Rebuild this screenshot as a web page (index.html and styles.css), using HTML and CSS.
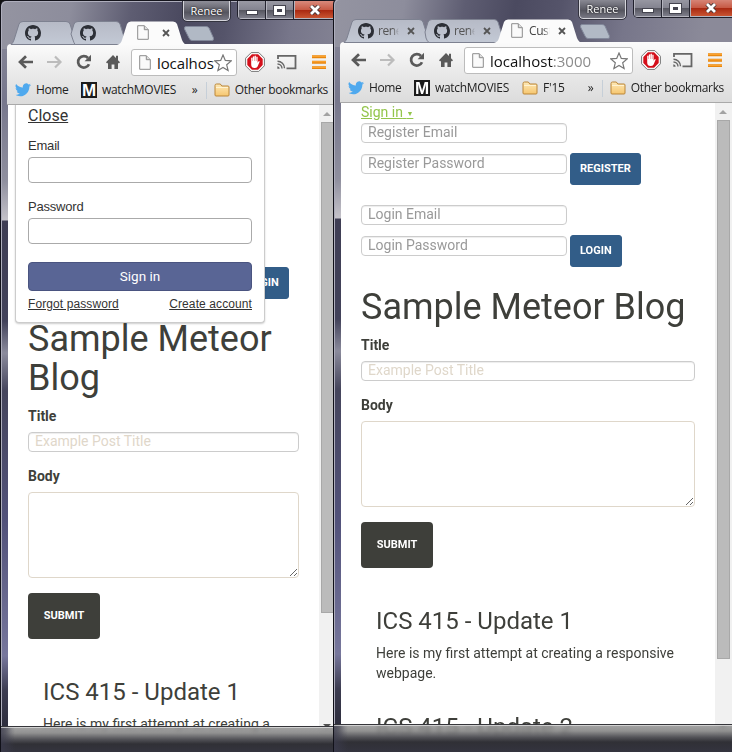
FILE: index.html
```html
<!DOCTYPE html>
<html lang="en">
<head>
<meta charset="utf-8">
<title>Sample Meteor Blog</title>
<link rel="stylesheet" href="styles.css">
</head>
<body>
<svg width="0" height="0" class="defs">
  <defs>
    <linearGradient id="folderFill" x1="0" y1="0" x2="0" y2="1"><stop offset="0" stop-color="#fde9b8"/><stop offset="1" stop-color="#f6c66f"/></linearGradient>
    <linearGradient id="tabFill" x1="0" y1="0" x2="0" y2="1"><stop offset="0" stop-color="#b6bac6"/><stop offset="1" stop-color="#c3c9d5"/></linearGradient>
    <symbol id="github" viewBox="0 0 16 16"><path d="M8 0C3.58 0 0 3.58 0 8c0 3.54 2.29 6.53 5.47 7.59.4.07.55-.17.55-.38 0-.19-.01-.82-.01-1.49-2.01.37-2.53-.49-2.69-.94-.09-.23-.48-.94-.82-1.13-.28-.15-.68-.52-.01-.53.63-.01 1.08.58 1.23.82.72 1.21 1.87.87 2.33.66.07-.52.28-.87.51-1.07-1.78-.2-3.64-.89-3.64-3.95 0-.87.31-1.59.82-2.15-.08-.2-.36-1.02.08-2.12 0 0 .67-.21 2.2.82.64-.18 1.32-.27 2-.27s1.36.09 2 .27c1.53-1.04 2.2-.82 2.2-.82.44 1.1.16 1.92.08 2.12.51.56.82 1.27.82 2.15 0 3.07-1.87 3.75-3.65 3.95.29.25.54.73.54 1.48 0 1.07-.01 1.93-.01 2.2 0 .21.15.46.55.38A8.01 8.01 0 0 0 16 8c0-4.42-3.58-8-8-8z" fill="#2c2f36"/></symbol>
    <symbol id="doc" viewBox="0 0 12 15"><path d="M.7.7h6.6l4 4v9.6H.7z" fill="#fafafa" stroke="#8d8d8d"/><path d="M7.3.7v4h4" fill="#ddd" stroke="#8d8d8d"/></symbol>
    <symbol id="close" viewBox="0 0 8 8"><path d="M1 1l6 6M7 1L1 7" stroke="#555" stroke-width="1.8"/></symbol>
    <symbol id="back" viewBox="0 0 16 14"><path d="M2 7h13M8 1.2L2 7l6 5.8" fill="none" stroke="#5a5a5a" stroke-width="2.7"/></symbol>
    <symbol id="forward" viewBox="0 0 16 14"><path d="M0 7h13M8 1.5L13.5 7 8 12.5" fill="none" stroke="#bcbcbc" stroke-width="2.2"/></symbol>
    <symbol id="reload" viewBox="0 0 16 16"><path d="M13 10.2A5.7 5.7 0 1 1 12 4" fill="none" stroke="#5a5a5a" stroke-width="2.7"/><path d="M15 .8v6.4H8.6z" fill="#5a5a5a"/></symbol>
    <symbol id="home" viewBox="0 0 14 16"><path d="M7 1L0 8.2l1.2 1.2L2 8.7V15h3.6v-4.6h2.8V15H12V8.7l.8.7L14 8.2l-2-2V1.8h-2V4z" fill="#5a5a5a"/></symbol>
    <symbol id="star" viewBox="0 0 18 18"><path d="M9 1l2.3 5.4 5.9.5-4.5 3.9 1.4 5.8L9 13.5l-5.1 3.1 1.4-5.8L.8 6.900l5.900-.5z" fill="#fff" stroke="#777" stroke-width="1.2"/></symbol>
    <symbol id="abp" viewBox="0 0 20 20"><path d="M6.200.6h7.600l5.600 5.600v7.600l-5.600 5.600H6.200L.6 13.800V6.200z" fill="#fff" stroke="#777" stroke-width="1"/><path d="M6.900 2.300h6.200l4.600 4.600v6.200l-4.600 4.600H6.900l-4.600-4.600V6.900z" fill="#d4101b"/><path d="M6.200 9.800V6q.8-.8 1.300 0v3h.3V4.700q.7-.9 1.400 0V9h.3V4q.7-.8 1.400 0v5h.4V5q.7-.8 1.300 0v5.700l1-1.500q1.200-.4 1 .6l-2 4.600q-.9 1.500-3 1.500-3.400 0-3.400-3.500z" fill="#fff"/></symbol>
    <symbol id="cast" viewBox="0 0 20 16"><path d="M1 5V1.800h17.500v12.500H9.500" fill="none" stroke="#666" stroke-width="1.8"/><path d="M.5 7.300a7 7 0 0 1 7 7M.5 10a4.500 4.500 0 0 1 4.500 4.500" fill="none" stroke="#666" stroke-width="1.400"/><path d="M.3 12.300a2.500 2.500 0 0 1 2.400 2.400H.3z" fill="#666"/></symbol>
    <symbol id="menu" viewBox="0 0 14 14"><path d="M0 1.800h14M0 7.300h14M0 12.800h14" stroke="#e8870e" stroke-width="3"/><path d="M0 1.300h14M0 6.800h14M0 12.300h14" stroke="#ffa938" stroke-width="1"/></symbol>
    <symbol id="bird" viewBox="0 0 24 20"><path d="M24 2.400c-.9.400-1.800.7-2.800.8 1-.6 1.800-1.600 2.200-2.700-1 .6-2 1-3.100 1.200A4.900 4.900 0 0 0 11.900 6.200C7.700 6 4.100 4 1.700.9-.1 3.800.8 6.200 3.200 7.500c-.8 0-1.600-.2-2.200-.6 0 2.300 1.600 4.400 3.900 4.900-.7.200-1.500.2-2.200.1.600 2 2.400 3.400 4.600 3.400A9.900 9.900 0 0 1 0 17.300 14 14 0 0 0 7.500 19.500c9.100 0 14.300-7.700 14-14.600 1-.7 1.800-1.600 2.500-2.500z" fill="#4fa9ee"/></symbol>
    <symbol id="folder" viewBox="0 0 16 14"><path d="M1 12V2.500Q1 1 2.500 1h3.800l1.500 2H14q1 0 1 1v8q0 1-1 1H2q-1 0-1-1z" fill="url(#folderFill)" stroke="#bb8638"/><path d="M2 4.500h12" stroke="#fff3d2"/></symbol>
  </defs>
</svg>

<div class="desktop">
  <section class="window window-left">
    <header class="titlebar">
      <svg class="tab-shapes" width="330" height="24" viewBox="0 0 330 24">
        <path d="M11 23.500Q13 22 14 19L19 3Q20 .5 23 .5H66Q69 .5 70 3L75 19Q76 22 78 23.500z" fill="url(#tabFill)" stroke="#7d8190"/>
        <path d="M75 23.500Q74 22 73 19L71 13 74 3Q75 .5 78 .5H116Q119 .5 120 3L125 19V23.500z" fill="url(#tabFill)" stroke="#7d8190"/>
        <path d="M117 24Q121 23 122 19L127 3Q128 .5 131 .5H173Q176 .5 177 3L182 19Q184 24 188 24z" fill="#fbfbfb"/>
        <path d="M186 5.500H206Q208 5.500 209 7L213.500 17Q214 19.500 212 19.500H192Q190 19.500 189 17L184.500 8Q184 5.500 186 5.500z" fill="#b1b9c5" stroke="#82889a"/>
      </svg>
      <div class="tabs">
        <div class="tab t1"><svg width="16" height="16"><use href="#github"/></svg></div>
        <div class="tab t2"><svg width="16" height="16"><use href="#github"/></svg></div>
        <div class="tab t3"><svg width="12" height="15"><use href="#doc"/></svg><svg class="x" width="8" height="8"><use href="#close"/></svg></div>
      </div>
      <div class="profile">Renee</div>
      <div class="controls">
        <div class="control min"><i></i></div><div class="control max"><i></i></div>
        <div class="control exit"><svg width="12" height="10" viewBox="0 0 12 10"><path d="M2 1l8 8M10 1L2 9" stroke="#433" stroke-width="4.500"/><path d="M2 1l8 8M10 1L2 9" stroke="#fff" stroke-width="2.800"/></svg></div>
      </div>
    </header>
    <div class="chrome">
      <div class="toolbar">
        <svg class="nav-back" width="16" height="14"><use href="#back"/></svg>
        <svg class="nav-forward" width="16" height="14"><use href="#forward"/></svg>
        <svg class="nav-reload" width="16" height="16"><use href="#reload"/></svg>
        <svg class="nav-home" width="14" height="16"><use href="#home"/></svg>
        <div class="address"><svg width="12" height="15"><use href="#doc"/></svg><span class="url">localhost</span><svg class="star" width="18" height="18"><use href="#star"/></svg></div>
        <svg class="ext-abp" width="20" height="20"><use href="#abp"/></svg>
        <svg class="ext-cast" width="20" height="16"><use href="#cast"/></svg>
        <svg class="ext-menu" width="14" height="14"><use href="#menu"/></svg>
      </div>
      <nav class="bookmarks">
        <svg class="bird" width="16" height="14"><use href="#bird"/></svg><span class="bm-home">Home</span>
        <span class="m-logo">M</span><span class="bm-movies">watchMOVIES</span>
        <span class="more">»</span><span class="divider"></span>
        <svg width="16" height="14"><use href="#folder"/></svg><span class="bm-other">Other bookmarks</span>
      </nav>
    </div>
    <div class="viewport">
      <main class="page">
        <div class="login-row"><button class="btn-blue">LOGIN</button></div>
        <h1>Sample Meteor Blog</h1>
        <label class="field-label">Title</label>
        <input class="text-input wide" placeholder="Example Post Title">
        <label class="field-label body-label">Body</label>
        <textarea class="post-body"></textarea>
        <button class="btn-submit">SUBMIT</button>
        <article class="post"><h3>ICS 415 - Update 1</h3><p>Here is my first attempt at creating a responsive webpage.</p></article>
      </main>
      <form class="dropdown">
        <a class="dd-close">Close</a>
        <label>Email</label><input>
        <label>Password</label><input>
        <div class="dd-button">Sign in</div>
        <div class="dd-links"><a>Forgot password</a><a>Create account</a></div>
      </form>
      <div class="scrollbar"><span class="up"></span><span class="thumb"></span><span class="down"></span></div>
    </div>
    <div class="glass-bottom"></div>
  </section>

  <section class="window window-right">
    <header class="titlebar">
      <svg class="tab-shapes" width="330" height="24" viewBox="0 0 330 24">
        <path d="M11 23.500Q13 22 14 19L19 3Q20 .5 23 .5H86Q89 .5 90 3L95 19Q96 22 98 23.500z" fill="url(#tabFill)" stroke="#7d8190"/>
        <path d="M96 23.500Q94 22 93 19L92 13 95 3Q96 .5 99 .5H161Q164 .5 165 3L170 19V23.500z" fill="url(#tabFill)" stroke="#7d8190"/>
        <path d="M161 24Q165 23 166 19L171 3Q172 .5 175 .5H235Q238 .5 239 3L244 19Q246 24 250 24z" fill="#fbfbfb"/>
        <path d="M249 5.500H269Q271 5.500 272 7L276.500 17Q277 19.500 275 19.500H255Q253 19.500 252 17L247.500 8Q247 5.500 249 5.500z" fill="#b1b9c5" stroke="#82889a"/>
      </svg>
      <div class="tabs">
        <div class="tab r1"><svg width="16" height="16"><use href="#github"/></svg><span>rene</span><svg class="x" width="8" height="8"><use href="#close"/></svg></div>
        <div class="tab r2"><svg width="16" height="16"><use href="#github"/></svg><span>rene</span><svg class="x" width="8" height="8"><use href="#close"/></svg></div>
        <div class="tab r3"><svg width="12" height="15"><use href="#doc"/></svg><span>Cust</span><svg class="x" width="8" height="8"><use href="#close"/></svg></div>
      </div>
      <div class="profile">Renee</div>
      <div class="controls">
        <div class="control min"><i></i></div><div class="control max"><i></i></div>
        <div class="control exit"><svg width="12" height="10" viewBox="0 0 12 10"><path d="M2 1l8 8M10 1L2 9" stroke="#433" stroke-width="4.500"/><path d="M2 1l8 8M10 1L2 9" stroke="#fff" stroke-width="2.800"/></svg></div>
      </div>
    </header>
    <div class="chrome">
      <div class="toolbar">
        <svg class="nav-back" width="16" height="14"><use href="#back"/></svg>
        <svg class="nav-forward" width="16" height="14"><use href="#forward"/></svg>
        <svg class="nav-reload" width="16" height="16"><use href="#reload"/></svg>
        <svg class="nav-home" width="14" height="16"><use href="#home"/></svg>
        <div class="address"><svg width="12" height="15"><use href="#doc"/></svg><span class="url">localhost<span class="port">:3000</span></span><svg class="star" width="18" height="18"><use href="#star"/></svg></div>
        <svg class="ext-abp" width="20" height="20"><use href="#abp"/></svg>
        <svg class="ext-cast" width="20" height="16"><use href="#cast"/></svg>
        <svg class="ext-menu" width="14" height="14"><use href="#menu"/></svg>
      </div>
      <nav class="bookmarks">
        <svg class="bird" width="16" height="14"><use href="#bird"/></svg><span class="bm-home">Home</span>
        <span class="m-logo">M</span><span class="bm-movies">watchMOVIES</span>
        <svg class="folder-f15" width="16" height="14"><use href="#folder"/></svg><span class="bm-f15">F'15</span>
        <span class="more">»</span><span class="divider"></span>
        <svg width="16" height="14"><use href="#folder"/></svg><span class="bm-other">Other bookmarks</span>
      </nav>
    </div>
    <div class="viewport">
      <main class="page">
        <a class="signin"><span>Sign in</span> <small>▼</small></a>
        <input class="text-input account" placeholder="Register Email">
        <div class="account-row"><input class="text-input account" placeholder="Register Password"><button class="btn-blue">REGISTER</button></div>
        <input class="text-input account second" placeholder="Login Email">
        <div class="account-row"><input class="text-input account" placeholder="Login Password"><button class="btn-blue">LOGIN</button></div>
        <h1>Sample Meteor Blog</h1>
        <label class="field-label">Title</label>
        <input class="text-input wide" placeholder="Example Post Title">
        <label class="field-label body-label">Body</label>
        <textarea class="post-body"></textarea>
        <button class="btn-submit">SUBMIT</button>
        <article class="post"><h3>ICS 415 - Update 1</h3><p>Here is my first attempt at creating a responsive webpage.</p></article>
        <article class="post next"><h3>ICS 415 - Update 2</h3></article>
      </main>
      <div class="scrollbar"><span class="up"></span><span class="thumb"></span><span class="down"></span></div>
    </div>
    <div class="glass-bottom"></div>
  </section>
</div>
</body>
</html>
```
FILE: styles.css
```css
* { box-sizing: border-box; }
body { margin: 0; overflow: hidden; background: #111; }
.defs { position: absolute; }
svg { display: block; flex: none; }
.desktop { position: relative; width: 732px; height: 752px; overflow: hidden; }

/* Windows */
.window {
  position: absolute;
  display: flex;
  flex-direction: column;
  padding-left: 7px;
  border-left: 1px solid #111119;
  border-top: 1px solid #15151d;
  border-radius: 6px 0 0 0;
  overflow: hidden;
  background:
    linear-gradient(100deg, #9494a1 0, #8d8d9c 70px, #5e5d72 130px, #4b4a60 180px, #55546a 225px, #77768a 290px, #8b8a99 370px) 0 0 / 100% 48px no-repeat,
    linear-gradient(#8d8d9c 0, #77778c 100px, #8f8f9e 180px, #c4c2c9 219px, #3f3e54 220px, #42425a 320px, #8b8b9c 352px, #45455c 390px, #52527a 520px, #77779c 655px, #3c3c50 690px, #2c2c3b 730px);
  box-shadow: inset 1px 1px 0 #aeaebc;
}
.window-left { left: 0; top: 0; width: 336px; height: 752px; }
.window-right { left: 333px; top: -2px; width: 403px; height: 754px; padding-right: 4px; }

/* Title bar */
.titlebar { position: relative; flex: none; display: flex; align-items: flex-start; height: 43px; margin-left: -8px; }
.tab-shapes { position: absolute; left: 0; top: 20px; }
.tabs { position: relative; display: flex; align-items: center; height: 23px; margin-top: 20px; }
.tab { display: flex; align-items: center; overflow: hidden; font: 12px "Open Sans", sans-serif; color: #555; }
.tab span { width: 21px; margin-left: 4px; overflow: hidden; -webkit-mask-image: linear-gradient(90deg, #000 70%, transparent); mask-image: linear-gradient(90deg, #000 70%, transparent); letter-spacing: -.4px; }
.tab .x { margin-left: 8px; }
.t1 { margin-left: 25px; width: 55px; }
.t2 { width: 57px; }
.t3 { width: 46px; }
.t3 .x { margin-left: 13px; }
.r1 { margin-left: 25px; width: 76px; }
.r2 { width: 76px; }
.r3 { width: 64px; margin-left: 1px; }
.r3 span { margin-left: 6px; color: #444; }
.profile {
  height: 20px; width: 47px; margin-left: auto;
  border: 1px solid #d5d5db; border-top: 0; border-radius: 0 0 4px 4px;
  outline: 1px solid #33333f;
  background: linear-gradient(#8e8e98, #55555f 60%, #777783);
  color: #fff; font: 11px/19px "Open Sans", sans-serif; text-align: center; text-shadow: 0 0 2px #000;
}
.controls { display: flex; height: 19px; margin-left: 7px; margin-right: -2px; border: 1px solid #20202c; border-top: 0; border-radius: 0 0 0 5px; overflow: hidden; }
.control { display: flex; align-items: center; justify-content: center; width: 28px; border-right: 1px solid #252531; box-shadow: inset 1px -1px #b5b5bf; background: linear-gradient(#9999a4, #83838f 50%, #55555f 51%, #82828f); }
.control.exit { width: 43px; padding-right: 0; background: linear-gradient(#d88a7c, #c65843 50%, #a82811 51%, #cc5a36); }
.min i { width: 12px; height: 5px; margin-top: 4px; border: 1px solid #44444f; background: #fff; }
.max i { width: 11px; height: 9px; border: 3px solid #fff; outline: 1px solid #44444f; background: #44444f; }

/* Browser bars */
.chrome { flex: none; height: 61px; width: calc(100% + 1px); margin-left: -1px; padding-left: 1px; border-bottom: 1px solid #a9a9a9; border-radius: 4px 0 0 0; background: linear-gradient(#fbfbfb, #e8e8e8 55%, #dcdcdc); }
.toolbar { display: flex; align-items: center; height: 36px; padding: 0 10px 0 10px; }
.nav-forward { margin-left: 13px; }
.nav-reload { margin-left: 13px; }
.nav-home { margin-left: 14px; }
.address { flex: 1; display: flex; align-items: center; min-width: 0; height: 27px; margin: 1px 8px 0 11px; padding-left: 7px; border: 1px solid #bcbcbc; border-radius: 3px; background: #fff; }
.url { flex: 1; min-width: 0; margin-left: 6px; overflow: hidden; white-space: nowrap; color: #111; font: 15px/20px "Open Sans", sans-serif; }
.window-left .url { letter-spacing: -.1px; }
.port { color: #8c8c8c; }
.star { margin-right: 4px; }
.ext-cast { margin-left: 12px; }
.ext-menu { margin-left: 15px; }
.bookmarks { display: flex; align-items: center; height: 20px; padding: 0 8px 0 7px; color: #222; font: 12px/18px "Open Sans", sans-serif; white-space: nowrap; }
.bm-home { margin-left: 5px; width: 45px; letter-spacing: -.4px; }
.m-logo { width: 16px; height: 16px; background: #1b1b1b; color: #fff; font: 700 17px/17px "Liberation Sans", sans-serif; text-align: center; }
.bm-movies { margin-left: 5px; width: 75px; letter-spacing: -.3px; }
.folder-f15 { margin-left: 12px; }
.bm-f15 { margin-left: 5px; letter-spacing: -.2px; }
.more { margin-left: auto; }
.divider { width: 1px; height: 17px; margin: 0 7px 0 8px; background: #c6cfd8; }
.bm-other { margin-left: 5px; letter-spacing: -.35px; }

/* Page */
.viewport { position: relative; flex: 1; display: flex; min-height: 0; overflow: hidden; background: #fff; }
.page { flex: 1; min-width: 0; padding: 0 20px; color: #3e3f3a; font: 14px/20px Roboto, sans-serif; }
.page > * { display: block; }
button, input, textarea { font-family: Roboto, sans-serif; }
h1, h3, p { margin: 0; font-weight: 400; }
h1 { margin-top: 21px; font-size: 36px; line-height: 39px; }
.signin { height: 20px; color: #93c54b; line-height: 18px; text-decoration: underline; }
.signin small { font-size: 7px; vertical-align: 1px; }
.text-input { display: block; height: 20px; padding: 0 6px 2px; border: 1px solid #ccc; border-radius: 4px; background: #fff; box-shadow: inset 0 1px 1px rgba(0,0,0,.075); font-size: 14px; }
.account { width: 206px; }
.account::placeholder { color: #999; opacity: 1; }
.account.second { margin-top: 20px; }
.account-row { gap: 3px; margin-top: 10px; }
.page > .account-row { display: flex; }
.account-row .account { margin-top: 1px; }
.btn-blue { height: 32px; padding: 0 9px; border: 1px solid #325d88; border-radius: 3px; background: #325d88; color: #fff; font-size: 11px; font-weight: 700; line-height: 28px; }
.page > .login-row { display: flex; padding: 162px 0 0 209px; }
.page > .field-label { margin: 8px 0 6px; font-weight: 700; }
.page > .body-label { margin-top: 14px; }
.wide { width: 100%; }
.wide::placeholder { color: #dfd7ca; opacity: 1; }
.post-body { width: 100%; height: 86px; border: 1px solid #dfd7ca; border-radius: 4px; resize: vertical; }
.btn-submit { width: 72px; height: 46px; margin-top: 15px; padding: 0 0 1px; border: 0; border-radius: 4px; background: #3e3f3a; color: #fff; font-size: 11px; font-weight: 700; }
.post { margin-top: 40px; padding-left: 15px; }
.post.next { margin-top: 31px; }
h3 { font-size: 24px; line-height: 26px; }
.post p { margin-top: 9px; }

/* Sign-in panel */
.dropdown { position: absolute; left: 7px; top: -1px; width: 250px; height: 219px; padding: 0 12px; border: 1px solid #ccc; border-top: 0; border-radius: 0 0 4px 4px; background: #fff; box-shadow: 0 1px 2px rgba(0,0,0,.2); color: #333; font: 13px/16px "Liberation Sans", sans-serif; }
.dd-close { display: block; height: 24px; font: 16px/24px Roboto, sans-serif; text-decoration: underline; }
.dropdown label { display: block; margin: 10px 0 3px; line-height: 16px; letter-spacing: -.2px; }
.dropdown input { display: block; width: 100%; height: 26px; border: 1px solid #aaa; border-radius: 4px; }
.dropdown input + label { margin: 16px 0 3px; }
.dd-button { height: 29px; margin-top: 18px; border: 1px solid #4a5480; border-radius: 4px; background: #596595; color: #fff; font: 13.500px/27px Roboto, sans-serif; text-align: center; }
.dd-links { display: flex; justify-content: space-between; margin-top: 5px; font-size: 12px; letter-spacing: .1px; text-decoration: underline; }

/* Scrollbar and lower frame */
.scrollbar { flex: none; display: flex; flex-direction: column; width: 17px; padding: 0 2px; background: #f1f1f1; }
.up, .down { width: 0; height: 0; margin-left: 2px; border: 4px solid transparent; border-top: 0; border-bottom-color: #a3a3a3; }
.up { margin-top: 7px; }
.down { margin-top: auto; margin-bottom: 24px; border-top: 4px solid #505050; border-bottom: 0; }
.thumb { width: 13px; height: 491px; margin-top: 6px; border: 1px solid #a8a8a8; background: #bbb; }
.window-right .thumb { height: 539px; }
.glass-bottom { position: absolute; left: 0; right: 0; bottom: 0; height: 26px; border-top: 1px solid #35353a; box-shadow: inset 0 1px rgba(230,230,230,.7); background: linear-gradient(90deg, rgba(60,60,78,.75) 0, transparent 14px), linear-gradient(rgba(145,145,145,.82), rgba(130,130,130,.88) 6px, #55555a 12px, #303036 17px, #34343f); -webkit-backdrop-filter: blur(2px); backdrop-filter: blur(2px); }
.window-right .glass-bottom { height: 28px; }
```
